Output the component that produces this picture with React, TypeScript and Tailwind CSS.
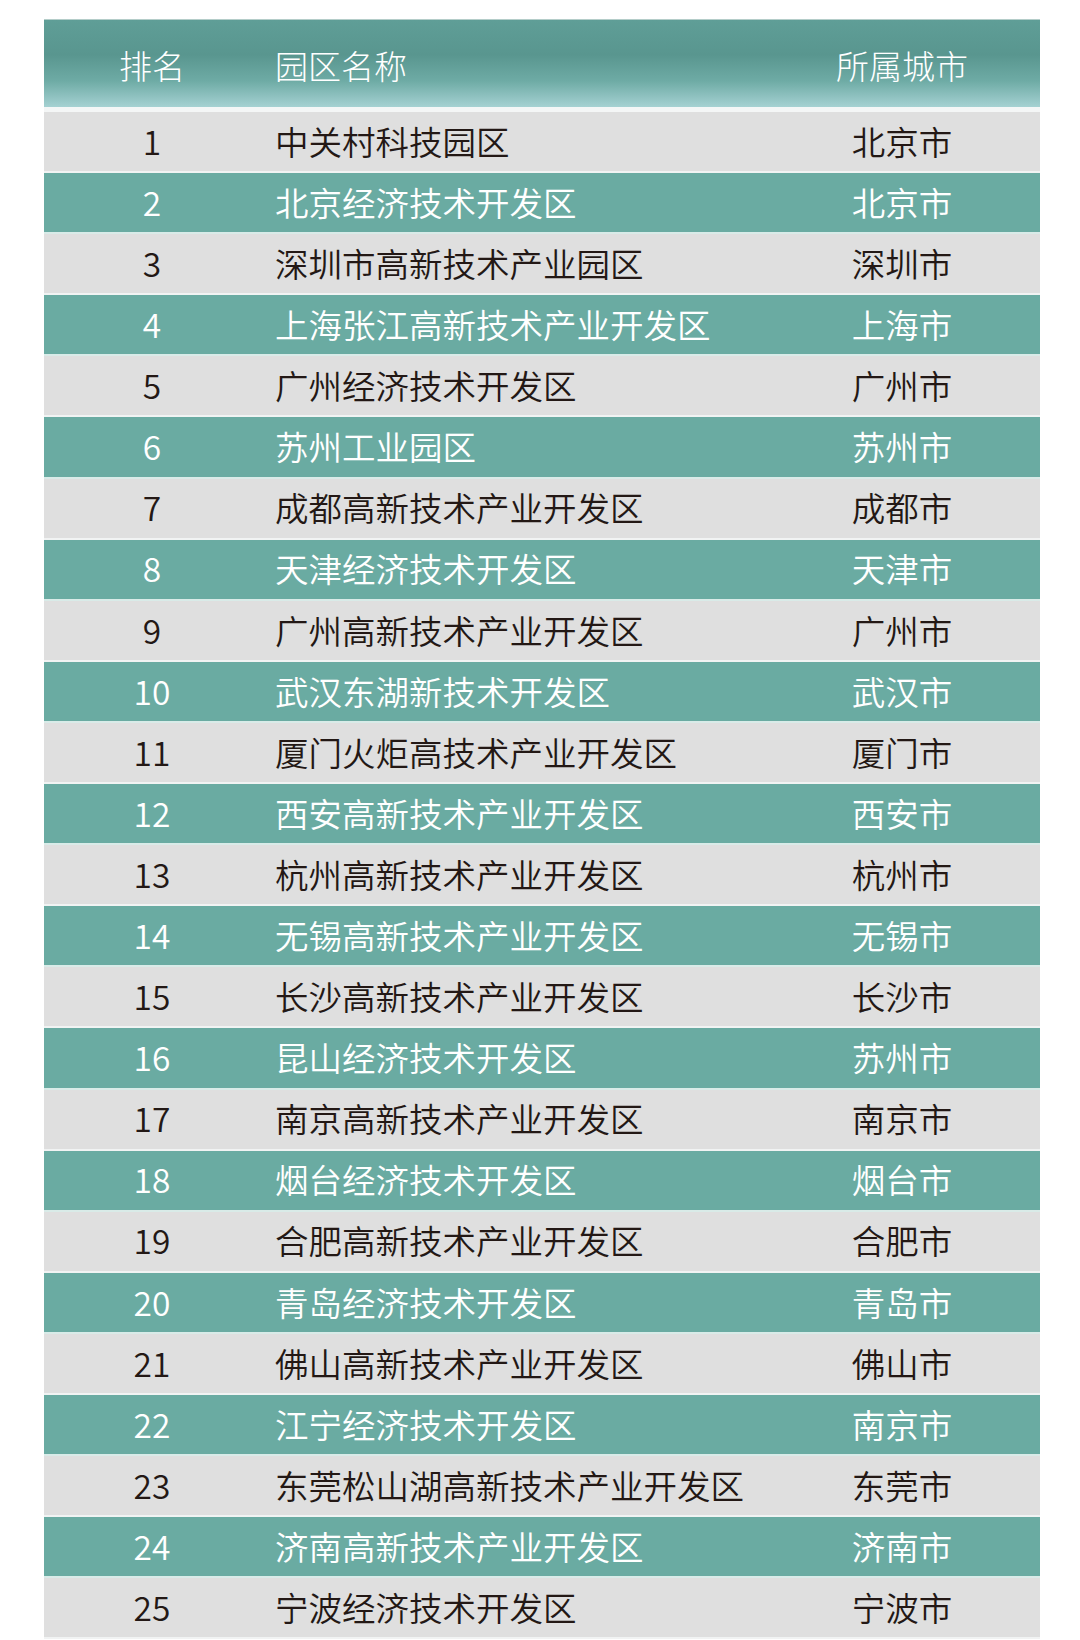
import React from 'react';

const rows: [string, string][] = [
  ['中关村科技园区', '北京市'],
  ['北京经济技术开发区', '北京市'],
  ['深圳市高新技术产业园区', '深圳市'],
  ['上海张江高新技术产业开发区', '上海市'],
  ['广州经济技术开发区', '广州市'],
  ['苏州工业园区', '苏州市'],
  ['成都高新技术产业开发区', '成都市'],
  ['天津经济技术开发区', '天津市'],
  ['广州高新技术产业开发区', '广州市'],
  ['武汉东湖新技术开发区', '武汉市'],
  ['厦门火炬高技术产业开发区', '厦门市'],
  ['西安高新技术产业开发区', '西安市'],
  ['杭州高新技术产业开发区', '杭州市'],
  ['无锡高新技术产业开发区', '无锡市'],
  ['长沙高新技术产业开发区', '长沙市'],
  ['昆山经济技术开发区', '苏州市'],
  ['南京高新技术产业开发区', '南京市'],
  ['烟台经济技术开发区', '烟台市'],
  ['合肥高新技术产业开发区', '合肥市'],
  ['青岛经济技术开发区', '青岛市'],
  ['佛山高新技术产业开发区', '佛山市'],
  ['江宁经济技术开发区', '南京市'],
  ['东莞松山湖高新技术产业开发区', '东莞市'],
  ['济南高新技术产业开发区', '济南市'],
  ['宁波经济技术开发区', '宁波市'],
];

const App = () => {
  return (
    <div className="w-[1080px] h-[1640px] overflow-hidden bg-white pt-[19px] pl-[44px] font-['Noto_Sans_CJK_SC','Noto_Sans',sans-serif] font-[350]">
      <div className="w-[996px]">
        {/* header */}
        <div className="grid grid-cols-[216px_1fr_276px] items-center h-[88px] pt-1 border-t border-[#b4cdc9] bg-[linear-gradient(to_bottom,#5f9e97_0%,#59968f_40%,#6eaba5_70%,#a5d1d2_100%)] text-white text-[33px] font-light">
          <div className="text-center">排名</div>
          <div className="pl-[15px]">园区名称</div>
          <div className="text-center">所属城市</div>
        </div>
        <div className="h-[5px] bg-[#f4f6f6]" />

        {/* body */}
        {rows.map(([name, city], i) => {
          const teal = i % 2 === 1;
          return (
            <div
              key={i}
              className={
                teal
                  ? 'grid grid-cols-[216px_1fr_276px] items-center h-[61.1px] pb-[2px] border-b-2 border-[#d9ebe8] bg-[#6aaba2] text-white text-[33.5px] leading-none'
                  : 'grid grid-cols-[216px_1fr_276px] items-center h-[61.1px] pb-[2px] border-b-2 border-[#f1f3f3] bg-[#dfdfdf] text-[#231815] text-[33.5px] leading-none'
              }
            >
              <div className="text-center">{i + 1}</div>
              <div className="pl-[15px] whitespace-nowrap">{name}</div>
              <div className="text-center">{city}</div>
            </div>
          );
        })}
      </div>
    </div>
  );
};

export default App;
